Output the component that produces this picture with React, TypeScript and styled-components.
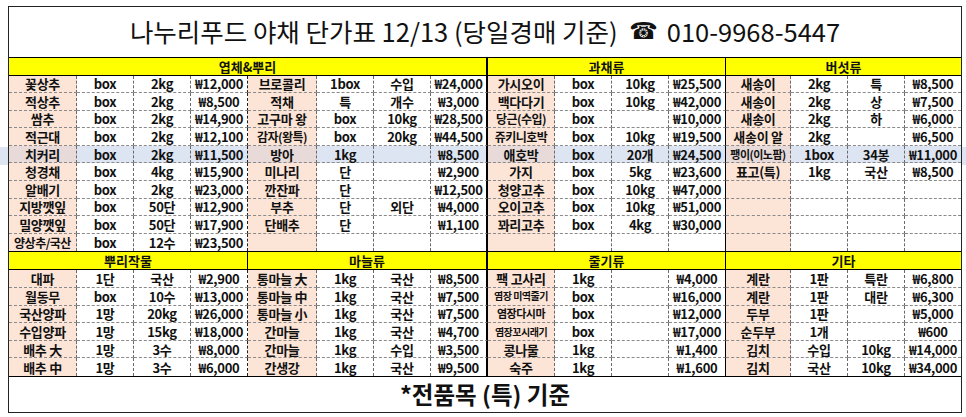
import React from 'react';
import styled, { createGlobalStyle } from 'styled-components';

const GlobalStyle = createGlobalStyle`
  html, body { margin: 0; padding: 0; background: #fff; }
  body { font-family: "Noto Sans CJK KR", "Noto Sans", sans-serif; color: #111; }
`;

const COLS = [68, 57, 57, 57, 69, 57, 57, 57, 67, 57, 57, 57, 65, 57, 57, 56];
const PEACH = '#fce4d6';
const HL = '#dee5f2';
const HL_PEACH = '#e7dad9';

type Row = [string, string, string, string];
type Group = { rows: Row[] };

const Page = styled.div`
  width: 966px;
  height: 417px;
  box-sizing: border-box;
  padding: 6px 0 0 8px;
  background: linear-gradient(${HL}, ${HL}) 0 147px / 100% 18px no-repeat, #fff;
  overflow: hidden;
`;

const Frame = styled.div`
  width: 954px;
  height: 407px;
  box-sizing: border-box;
  border: 1px solid #222;
  background: #fff;
  display: flex;
  flex-direction: column;
`;

const Title = styled.div`
  height: 52px;
  box-sizing: border-box;
  border-bottom: 1px solid #000;
  display: flex;
  align-items: center;
  justify-content: center;
  font-size: 25.5px;
  font-weight: 400;
  white-space: pre;
  padding-bottom: 2px;
`;

const Phone = styled.span`
  font-family: "DejaVu Sans", sans-serif;
  font-size: 23px;
  margin-right: 9px;
`;

const Section = styled.div<{ $rows: number }>`
  display: grid;
  grid-template-columns: ${COLS.map((c) => c + 'px').join(' ')};
  grid-template-rows: 18px repeat(${(p) => p.$rows}, 17.6px);
  border-bottom: 1px solid #000;
`;

const edgeFor = (c: number) => {
  if (c === 15) return 'none';
  if (c === 7) return '2px solid #000';
  if (c === 11) return '1px solid #000';
  if (c === 3) return '1px dashed #222';
  return '1px dashed #6a6a6a';
};

const Head = styled.div<{ $span: number; $edge: string }>`
  grid-column: span ${(p) => p.$span};
  box-sizing: border-box;
  background: #ffff00;
  border-bottom: 1px solid #000;
  border-right: ${(p) => p.$edge};
  display: flex;
  align-items: center;
  justify-content: center;
  font-size: 13px;
  font-weight: 700;
  line-height: 1;
`;

const Cell = styled.div<{ $peach: boolean; $hl: boolean; $edge: string; $last: boolean; $size: number }>`
  box-sizing: border-box;
  min-width: 0;
  display: flex;
  align-items: center;
  justify-content: center;
  background: ${(p) => (p.$hl ? (p.$peach ? HL_PEACH : HL) : p.$peach ? PEACH : '#fff')};
  border-right: ${(p) => p.$edge};
  border-bottom: ${(p) => (p.$last ? 'none' : '1px dashed #8a8a8a')};
  font-size: ${(p) => p.$size}px;
  font-weight: 700;
  line-height: 1;
  white-space: nowrap;
  letter-spacing: ${(p) => (p.$size < 13 ? '-0.5px' : '-0.3px')};
`;

const Footer = styled.div`
  flex: 1;
  display: flex;
  align-items: center;
  justify-content: center;
  font-size: 23.5px;
  font-weight: 700;
  padding-bottom: 1px;
`;

const E: Row = ['', '', '', ''];

const S1: Group[] = [
  {
    rows: [
      ['꽃상추', 'box', '2kg', '₩12,000'],
      ['적상추', 'box', '2kg', '₩8,500'],
      ['쌈추', 'box', '2kg', '₩14,900'],
      ['적근대', 'box', '2kg', '₩12,100'],
      ['치커리', 'box', '2kg', '₩11,500'],
      ['청경채', 'box', '4kg', '₩15,900'],
      ['알배기', 'box', '2kg', '₩23,000'],
      ['지방깻잎', 'box', '50단', '₩12,900'],
      ['밀양깻잎', 'box', '50단', '₩17,900'],
      ['양상추/국산', 'box', '12수', '₩23,500'],
    ],
  },
  {
    rows: [
      ['브로콜리', '1box', '수입', '₩24,000'],
      ['적채', '특', '개수', '₩3,000'],
      ['고구마 왕', 'box', '10kg', '₩28,500'],
      ['감자(왕특)', 'box', '20kg', '₩44,500'],
      ['방아', '1kg', '', '₩8,500'],
      ['미나리', '단', '', '₩2,900'],
      ['깐잔파', '단', '', '₩12,500'],
      ['부추', '단', '외단', '₩4,000'],
      ['단배추', '단', '', '₩1,100'],
      E,
    ],
  },
  {
    rows: [
      ['가시오이', 'box', '10kg', '₩25,500'],
      ['백다다기', 'box', '10kg', '₩42,000'],
      ['당근(수입)', 'box', '', '₩10,000'],
      ['쥬키니호박', 'box', '10kg', '₩19,500'],
      ['애호박', 'box', '20개', '₩24,500'],
      ['가지', 'box', '5kg', '₩23,600'],
      ['청양고추', 'box', '10kg', '₩47,000'],
      ['오이고추', 'box', '10kg', '₩51,000'],
      ['꽈리고추', 'box', '4kg', '₩30,000'],
      E,
    ],
  },
  {
    rows: [
      ['새송이', '2kg', '특', '₩8,500'],
      ['새송이', '2kg', '상', '₩7,500'],
      ['새송이', '2kg', '하', '₩6,000'],
      ['새송이 알', '2kg', '', '₩6,500'],
      ['팽이(이노팜)', '1box', '34봉', '₩11,000'],
      ['표고(특)', '1kg', '국산', '₩8,500'],
      E,
      E,
      E,
      E,
    ],
  },
];

const S2: Group[] = [
  {
    rows: [
      ['대파', '1단', '국산', '₩2,900'],
      ['월동무', 'box', '10수', '₩13,000'],
      ['국산양파', '1망', '20kg', '₩26,000'],
      ['수입양파', '1망', '15kg', '₩18,000'],
      ['배추 大', '1망', '3수', '₩8,000'],
      ['배추 中', '1망', '3수', '₩6,000'],
    ],
  },
  {
    rows: [
      ['통마늘 大', '1kg', '국산', '₩8,500'],
      ['통마늘 中', '1kg', '국산', '₩7,500'],
      ['통마늘 小', '1kg', '국산', '₩7,500'],
      ['간마늘', '1kg', '국산', '₩4,700'],
      ['간마늘', '1kg', '수입', '₩3,500'],
      ['간생강', '1kg', '국산', '₩9,500'],
    ],
  },
  {
    rows: [
      ['팩 고사리', '1kg', '', '₩4,000'],
      ['염장 미역줄기', 'box', '', '₩16,000'],
      ['염장다시마', 'box', '', '₩12,000'],
      ['염장꼬시래기', 'box', '', '₩17,000'],
      ['콩나물', '1kg', '', '₩1,400'],
      ['숙주', '1kg', '', '₩1,600'],
    ],
  },
  {
    rows: [
      ['계란', '1판', '특란', '₩6,800'],
      ['계란', '1판', '대란', '₩6,300'],
      ['두부', '1판', '', '₩5,000'],
      ['순두부', '1개', '', '₩600'],
      ['김치', '수입', '10kg', '₩14,000'],
      ['김치', '국산', '10kg', '₩34,000'],
    ],
  },
];

const SMALL: Record<string, number> = {
  '팽이(이노팜)': 11,
  '염장 미역줄기': 10,
  '염장다시마': 11,
  '염장꼬시래기': 10,
  '쥬키니호박': 12,
  '양상추/국산': 12,
  '감자(왕특)': 12,
  '당근(수입)': 12,
};

type HeadDef = { label: string; span: number; edge: string };

const TableSection: React.FC<{ heads: HeadDef[]; groups: Group[]; hlRow?: number }> = ({ heads, groups, hlRow }) => {
  const n = groups[0].rows.length;
  const cells: React.ReactNode[] = [];
  for (let r = 0; r < n; r++) {
    groups.forEach((g, gi) => {
      g.rows[r].forEach((txt, ci) => {
        const c = gi * 4 + ci;
        cells.push(
          <Cell
            key={`${r}-${c}`}
            $peach={ci === 0}
            $hl={r === hlRow}
            $edge={edgeFor(c)}
            $last={r === n - 1}
            $size={ci === 0 && SMALL[txt] ? SMALL[txt] : 13}
          >
            {txt}
          </Cell>
        );
      });
    });
  }
  return (
    <Section $rows={n}>
      {heads.map((h) => (
        <Head key={h.label} $span={h.span} $edge={h.edge}>
          {h.label}
        </Head>
      ))}
      {cells}
    </Section>
  );
};

export default function App() {
  return (
    <>
      <GlobalStyle />
      <Page>
        <Frame>
          <Title>
            {'나누리푸드 야채 단가표 12/13 (당일경매 기준)  '}
            <Phone>☎</Phone>
            {'010-9968-5447'}
          </Title>
          <TableSection
            heads={[
              { label: '엽체&뿌리', span: 8, edge: '2px solid #000' },
              { label: '과채류', span: 4, edge: '1px solid #000' },
              { label: '버섯류', span: 4, edge: 'none' },
            ]}
            groups={S1}
            hlRow={4}
          />
          <TableSection
            heads={[
              { label: '뿌리작물', span: 4, edge: '1px solid #000' },
              { label: '마늘류', span: 4, edge: '2px solid #000' },
              { label: '줄기류', span: 4, edge: '1px solid #000' },
              { label: '기타', span: 4, edge: 'none' },
            ]}
            groups={S2}
          />
          <Footer>*전품목 (특) 기준</Footer>
        </Frame>
      </Page>
    </>
  );
}
